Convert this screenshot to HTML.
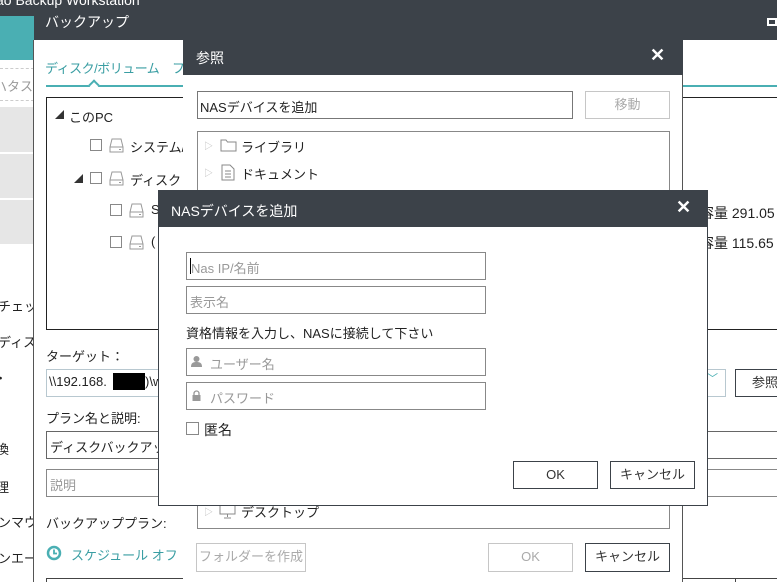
<!DOCTYPE html>
<html><head><meta charset="utf-8"><style>
*{margin:0;padding:0;box-sizing:border-box}
html,body{width:777px;height:582px;overflow:hidden}
body{position:relative;background:#fff;font-family:"Liberation Sans","Noto Sans CJK JP",sans-serif;font-size:13px;color:#222}
.a{position:absolute}
.dark{background:#3c4249}
.box{position:absolute;border:1px solid #888;background:#fff}
.t{position:absolute;white-space:nowrap}
.btn{position:absolute;border:1px solid #3c4249;background:#fff;text-align:center;line-height:25px;font-size:13px;color:#333}
.btnd{position:absolute;border:1px solid #c6c6c6;background:#fff;text-align:center;line-height:25px;color:#aaa}
.cb{position:absolute;width:12px;height:12px;border:1px solid #888;background:#fff}
.ph{color:#999}
.drv{position:absolute;width:15px;height:15px}
</style></head><body>
<div class="a" style="left:0;top:0;width:34px;height:582px;overflow:hidden">
<div class="a dark" style="left:0;top:0;width:34px;height:16px"></div>
<div class="a" style="left:0;top:16px;width:34px;height:44px;background:#4aafb3"></div>
<div class="a" style="left:0;top:68px;width:34px;border-top:1px dashed #ccc"></div>
<div class="a" style="left:0;top:100px;width:34px;border-top:1px dashed #ccc"></div>
<div class="t" style="left:-6px;top:76px;color:#999">ハタスク</div>
<div class="a" style="left:0;top:107px;width:34px;height:45px;background:#e6e6e6"></div>
<div class="a" style="left:0;top:154px;width:34px;height:44px;background:#e6e6e6"></div>
<div class="a" style="left:0;top:200px;width:34px;height:44px;background:#e6e6e6"></div>
<div class="t" style="left:-2px;top:296px">チェック</div>
<div class="t" style="left:-2px;top:332px">ディスク</div>
<div class="t" style="left:-6px;top:368px">・</div>
<div class="t" style="left:-4px;top:439px">換</div>
<div class="t" style="left:-4px;top:477px">理</div>
<div class="t" style="left:-2px;top:512px">ンマウ</div>
<div class="t" style="left:-2px;top:548px">ンエータ</div>
</div>
<div class="a" style="left:34px;top:0;width:743px;height:582px;overflow:hidden;background:#fff">
<div class="a dark" style="left:0;top:0;width:743px;height:40px"></div>
</div>
<div class="t" style="left:-4px;top:-8px;color:#fff;font-size:14px">ao Backup Workstation</div>
<div class="t" style="left:45px;top:12px;color:#fff;font-size:14px">バックアップ</div>
<div class="a" style="left:767px;top:18px;width:10px;height:8px;border:2px solid #fff"></div>
<div class="a" style="left:33px;top:40px;width:1px;height:542px;background:#555"></div>
<div class="t" style="left:45px;top:58px;color:#3a9ea3;font-size:13px;letter-spacing:-0.5px">ディスク/ボリューム</div>
<div class="t" style="left:172px;top:58px;color:#3a9ea3;font-size:13px">フ</div>
<div class="a" style="left:46px;top:85px;width:731px;height:2px;background:#4aafb3"></div>
<div class="a" style="left:90px;top:81px;width:8px;height:8px;background:#fff;border-left:2px solid #4aafb3;border-top:2px solid #4aafb3;transform:rotate(45deg)"></div>
<div class="a" style="left:46px;top:97px;width:740px;height:233px;border:1px solid #222"></div>
<div class="t" style="left:55px;top:108px;font-size:9px;color:#333">◢</div>
<div class="t" style="left:69px;top:107px">このPC</div>
<div class="cb" style="left:90px;top:139px"></div>
<svg class="drv" style="left:109px;top:138px" viewBox="0 0 15 15"><path d="M3 1h9l2 8v5H1V9z M1 9h13 M10 11.5h2" fill="none" stroke="#999"/></svg>
<div class="t" style="left:130px;top:137px">システム/</div>
<div class="t" style="left:74px;top:172px;font-size:9px;color:#333">◢</div>
<div class="cb" style="left:90px;top:172px"></div>
<svg class="drv" style="left:109px;top:171px" viewBox="0 0 15 15"><path d="M3 1h9l2 8v5H1V9z M1 9h13 M10 11.5h2" fill="none" stroke="#999"/></svg>
<div class="t" style="left:130px;top:170px">ディスク 0</div>
<div class="cb" style="left:110px;top:204px"></div>
<svg class="drv" style="left:129px;top:203px" viewBox="0 0 15 15"><path d="M3 1h9l2 8v5H1V9z M1 9h13 M10 11.5h2" fill="none" stroke="#999"/></svg>
<div class="t" style="left:151px;top:202px">S</div>
<div class="cb" style="left:110px;top:236px"></div>
<svg class="drv" style="left:129px;top:235px" viewBox="0 0 15 15"><path d="M3 1h9l2 8v5H1V9z M1 9h13 M10 11.5h2" fill="none" stroke="#999"/></svg>
<div class="t" style="left:151px;top:234px">(</div>
<div class="t" style="left:700px;top:203px;font-size:14px">容量 291.05</div>
<div class="t" style="left:700px;top:233px;font-size:14px">容量 115.65</div>
<div class="t" style="left:46px;top:346px">ターゲット：</div>
<div class="a" style="left:46px;top:369px;width:680px;height:28px;border:1px solid #b8c8d0"></div>
<div class="t" style="left:49px;top:374px">\\192.168.</div>
<div class="a" style="left:113px;top:373px;width:32px;height:17px;background:#000"></div>
<div class="t" style="left:145px;top:374px">)\w</div>
<div class="t" style="left:707px;top:370px;color:#4aafb3;font-size:11px">﹀</div>
<div class="btn" style="left:735px;top:369px;width:60px;height:28px">参照</div>
<div class="t" style="left:46px;top:408px">プラン名と説明:</div>
<div class="a" style="left:46px;top:431px;width:740px;height:28px;border:1px solid #666"></div>
<div class="t" style="left:50px;top:437px">ディスクバックアップ</div>
<div class="a" style="left:46px;top:469px;width:740px;height:28px;border:1px solid #888"></div>
<div class="t ph" style="left:50px;top:475px">説明</div>
<div class="t" style="left:46px;top:513px">バックアッププラン:</div>
<svg class="a" style="left:46px;top:545px" width="16" height="16"><circle cx="8" cy="8" r="6" fill="none" stroke="#4aafb3" stroke-width="2.5"/><path d="M8 4.5V8.5H11" fill="none" stroke="#4aafb3" stroke-width="1.8"/></svg>
<div class="t" style="left:71px;top:545px;color:#3a9ea3">スケジュール オフ</div>
<div class="a" style="left:46px;top:578px;width:740px;height:10px;border:1px solid #444"></div>
<div class="a" style="left:735px;top:578px;width:50px;height:10px;border:1px solid #444"></div>
<div class="a" style="left:183px;top:40px;width:500px;height:542px;background:#fff;border-right:1px solid #555"></div>
<div class="a dark" style="left:183px;top:40px;width:500px;height:35px"></div>
<div class="t" style="left:196px;top:48px;color:#fff;font-size:14px">参照</div>
<div class="t" style="left:650px;top:45px;color:#fff;font-size:18px;font-weight:bold">✕</div>
<div class="box" style="left:197px;top:91px;width:376px;height:28px;border-color:#777"></div>
<div class="t" style="left:200px;top:97px">NASデバイスを追加</div>
<div class="btnd" style="left:585px;top:91px;width:85px;height:28px">移動</div>
<div class="box" style="left:197px;top:131px;width:473px;height:398px;border-color:#888"></div>
<div class="t" style="left:204px;top:139px;color:#bbb;font-size:9px">▷</div>
<svg class="a" style="left:220px;top:138px" width="17" height="14"><path d="M1 2h5l1.5 2H16v9H1z" fill="none" stroke="#888"/></svg>
<div class="t" style="left:241px;top:137px">ライブラリ</div>
<div class="t" style="left:204px;top:166px;color:#bbb;font-size:9px">▷</div>
<svg class="a" style="left:221px;top:164px" width="14" height="17"><path d="M1 1h8l4 4v11H1z M4 7h6M4 10h6M4 13h6" fill="none" stroke="#888"/></svg>
<div class="t" style="left:241px;top:164px">ドキュメント</div>
<div class="t" style="left:204px;top:505px;color:#bbb;font-size:9px">▷</div>
<svg class="a" style="left:219px;top:503px" width="18" height="16"><path d="M1 1h15v10H1z M8.5 11v3M5 15h7" fill="none" stroke="#888"/></svg>
<div class="t" style="left:241px;top:502px">デスクトップ</div>
<div class="btnd" style="left:196px;top:543px;width:110px;height:29px">フォルダーを作成</div>
<div class="btnd" style="left:488px;top:543px;width:85px;height:29px">OK</div>
<div class="btn" style="left:585px;top:543px;width:85px;height:29px">キャンセル</div>
<div class="a" style="left:158px;top:190px;width:550px;height:316px;background:#fff;border:1px solid #3c4249"></div>
<div class="a dark" style="left:158px;top:190px;width:550px;height:37px"></div>
<div class="t" style="left:171px;top:201px;color:#fff;font-size:14px">NASデバイスを追加</div>
<div class="t" style="left:676px;top:197px;color:#fff;font-size:18px;font-weight:bold">✕</div>
<div class="box" style="left:186px;top:252px;width:300px;height:28px"></div>
<div class="a" style="left:190px;top:258px;width:1px;height:16px;background:#000"></div>
<div class="t ph" style="left:191px;top:258px">Nas IP/名前</div>
<div class="box" style="left:186px;top:286px;width:300px;height:28px"></div>
<div class="t ph" style="left:190px;top:292px">表示名</div>
<div class="t" style="left:186px;top:323px">資格情報を入力し、NASに接続して下さい</div>
<div class="box" style="left:186px;top:348px;width:300px;height:28px"></div>
<svg class="a" style="left:191px;top:355px" width="11" height="13"><circle cx="5.5" cy="4" r="3" fill="#999"/><path d="M0 12c0-4 2-5 5.5-5s5.5 1 5.5 5z" fill="#999"/></svg>
<div class="t ph" style="left:210px;top:354px">ユーザー名</div>
<div class="box" style="left:186px;top:382px;width:300px;height:28px"></div>
<svg class="a" style="left:192px;top:390px" width="9" height="11"><path d="M2 5V3.5a2.5 2.5 0 0 1 5 0V5" fill="none" stroke="#999" stroke-width="1.3"/><rect x="0.5" y="5" width="8" height="6" fill="#999"/></svg>
<div class="t ph" style="left:210px;top:388px">パスワード</div>
<div class="cb" style="left:186px;top:422px;width:13px;height:13px"></div>
<div class="t" style="left:204px;top:420px;font-size:14px">匿名</div>
<div class="btn" style="left:513px;top:461px;width:85px;height:28px">OK</div>
<div class="btn" style="left:610px;top:461px;width:85px;height:28px">キャンセル</div>
</body></html>
